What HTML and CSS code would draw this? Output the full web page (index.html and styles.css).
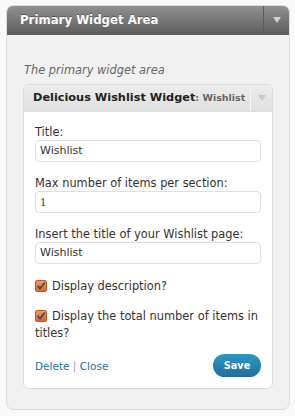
FILE: index.html
```html
<!DOCTYPE html>
<html>
<head>
<meta charset="utf-8">
<link rel="stylesheet" href="styles.css">
</head>
<body>
<div class="area">
  <div class="area-head">
    <span class="area-title">Primary Widget Area</span>
    <span class="area-toggle"><span class="arrow"></span></span>
  </div>
  <div class="area-body">
    <p class="desc">The primary widget area</p>
    <div class="widget">
      <div class="widget-head">
        <span class="widget-title">Delicious Wishlist Widget<span class="in-title">: Wishlist</span></span>
        <span class="widget-toggle"><span class="arrow light"></span></span>
      </div>
      <div class="widget-body">
        <label class="field">
          <span class="label">Title:</span>
          <span class="input">Wishlist</span>
        </label>
        <label class="field">
          <span class="label">Max number of items per section:</span>
          <span class="input serif">1</span>
        </label>
        <label class="field">
          <span class="label">Insert the title of your Wishlist page:</span>
          <span class="input">Wishlist</span>
        </label>
        <div class="check"><span class="box"><svg viewBox="0 0 12 12" width="12" height="12"><path d="M2.6 5.8 L5 8.6 L9.8 2.6" fill="none" stroke="#4a4a4a" stroke-width="1.7"/></svg></span>Display description?</div>
        <div class="check"><span class="box"><svg viewBox="0 0 12 12" width="12" height="12"><path d="M2.6 5.8 L5 8.6 L9.8 2.6" fill="none" stroke="#4a4a4a" stroke-width="1.7"/></svg></span>Display the total number of items in titles?</div>
        <div class="actions">
          <span class="links"><a class="link">Delete</a> <span class="sep">|</span> <a class="link">Close</a></span>
          <span class="save">Save</span>
        </div>
      </div>
    </div>
  </div>
</div>
</body>
</html>
```
FILE: styles.css
```css
html, body {
  margin: 0;
  padding: 0;
  background: #f9f9f9;
}
body {
  font-family: "DejaVu Sans", Verdana, sans-serif;
  font-size: 11.4px;
  color: #333;
  padding: 5px 5px 3px 6px;
}
.area {
  border: 1px solid #dcdcdc;
  border-radius: 7px;
  background: #f1f1f1;
  overflow: hidden;
}
.area-head {
  display: flex;
  align-items: stretch;
  height: 30px;
  margin: -1px -1px 0 -1px;
  background: linear-gradient(#929292, #5c5c5c);
  border-radius: 7px 7px 0 0;
}
.area-title {
  flex: 1;
  color: #fff;
  font-weight: bold;
  font-size: 11.75px;
  line-height: 30px;
  padding-left: 14px;
  text-shadow: 0 -1px 0 rgba(0,0,0,0.3);
}
.area-toggle {
  width: 26px;
  border-left: 1px solid #5a5a5a;
  display: flex;
  align-items: center;
  justify-content: center;
}
.arrow {
  width: 0;
  height: 0;
  border-left: 4px solid transparent;
  border-right: 4px solid transparent;
  border-top: 6px solid #d0d0d0;
}
.arrow.light {
  border-top-color: #c8c8c8;
}
.area-body {
  padding: 27px 16px 20px 16px;
}
.desc {
  margin: 0 0 6px 1px;
  font-style: italic;
  color: #666;
  line-height: 16px;
}
.widget {
  border: 1px solid #dcdcdc;
  border-radius: 6px;
  background: #fff;
  overflow: hidden;
}
.widget-head {
  display: flex;
  height: 26px;
  background: linear-gradient(#ececec, #e0e0e0);
  border-bottom: 1px solid #dcdcdc;
}
.widget-title {
  flex: 1;
  font-weight: bold;
  font-size: 11.3px;
  line-height: 26px;
  color: #222;
  padding-left: 9px;
  white-space: nowrap;
  overflow: hidden;
}
.in-title {
  font-size: 9.5px;
  color: #666;
}
.widget-toggle {
  width: 21px;
  border-left: 1px solid #f6f6f6;
  display: flex;
  align-items: center;
  justify-content: center;
}
.widget-body {
  padding: 12px 11px 11px 11px;
}
.field {
  display: block;
  margin-bottom: 13px;
}
.label {
  display: block;
  line-height: 16px;
}
.input {
  display: block;
  height: 20px;
  line-height: 20px;
  border: 1px solid #dfdfdf;
  border-radius: 4px;
  padding: 0 4px;
  color: #333;
  font-size: 11px;
}
.input.serif {
  font-family: "Liberation Serif", serif;
  font-size: 12px;
}
.check {
  line-height: 17px;
  margin-top: 14px;
  margin-bottom: 0;
}
.field + .check {
  margin-top: 14px;
}
.check + .check {
  margin-top: 13px;
}
.box {
  display: inline-block;
  vertical-align: -2px;
  width: 12px;
  height: 12px;
  box-sizing: border-box;
  border-radius: 2px;
  background: linear-gradient(#f2956a, #d9642f);
  border: 1px solid #c75a28;
  margin-right: 5px;
  line-height: 0;
}
.box svg {
  margin: -1px 0 0 -1px;
}
.field:nth-of-type(3) {
  margin-bottom: 0;
}
.actions {
  display: flex;
  justify-content: space-between;
  align-items: center;
  margin-top: 12px;
}
.links {
  font-size: 10.5px;
}
.link {
  color: #21759b;
}
.sep {
  color: #999;
}
.save {
  display: inline-block;
  width: 48px;
  height: 23px;
  line-height: 23px;
  text-align: center;
  border-radius: 12px;
  background: linear-gradient(#2e97c8, #1f6f99);
  color: #fff;
  font-weight: bold;
  font-size: 9.7px;
}
```
